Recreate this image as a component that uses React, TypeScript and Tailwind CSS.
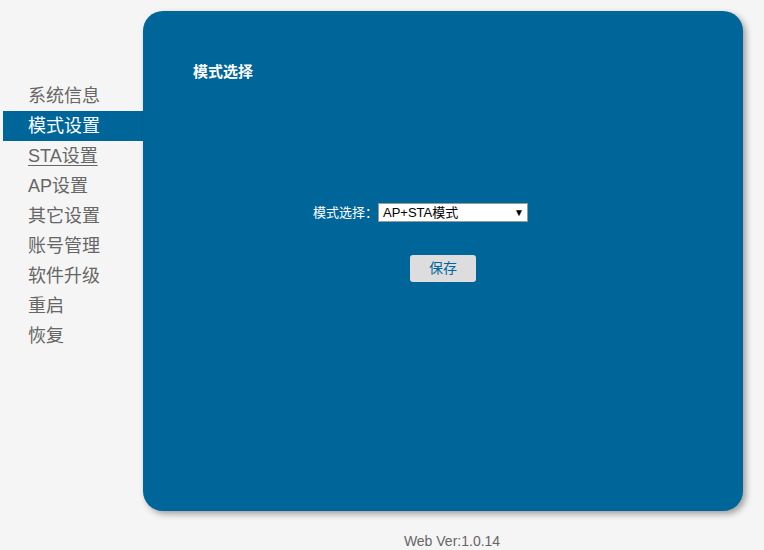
import React from 'react';

const menu = ['系统信息', '模式设置', 'STA设置', 'AP设置', '其它设置', '账号管理', '软件升级', '重启', '恢复'];

export default function App() {
  const font = { fontFamily: '"Liberation Sans", "Noto Sans CJK SC", sans-serif' };
  return (
    <div className="w-[764px] h-[550px] bg-[#f5f5f5] overflow-hidden" style={font}>
      <div className="flex pt-[11px]">
        {/* side menu */}
        <ul className="w-[140px] ml-[3px] mt-[70px] text-[18px]">
          {menu.map((m, i) => (
            <li
              key={m}
              className={
                'h-[30px] leading-[30px] pl-[25px] ' +
                (i === 1 ? 'bg-[#006699] text-white' : 'text-[#666]') +
                (i === 2 ? ' underline underline-offset-[3px]' : '')
              }
            >
              {m}
            </li>
          ))}
        </ul>

        {/* main panel */}
        <div className="w-[600px] h-[500px] bg-[#006699] rounded-[20px] shadow-[3px_3px_6px_rgba(0,0,0,0.35)] text-white">
          <div className="pl-[50px] pt-[51px] text-[15px] leading-[20px] font-bold">模式选择</div>
          <div className="flex items-center pl-[170px] mt-[121px] text-[13px]">
            <span>模式选择：</span>
            <div className="w-[150px] h-[19px] bg-white border border-[#999] text-black flex items-center justify-between pl-[4px] pr-[3px]">
              <span>AP+STA模式</span>
              <span className="text-[10px]">▼</span>
            </div>
          </div>
          <div className="pl-[267px] mt-[32px]">
            <button className="w-[66px] h-[27px] bg-[#dddddd] rounded-[3px] text-[#006699] text-[14px]">保存</button>
          </div>
        </div>
      </div>
      <div className="text-center text-[14px] text-[#666] mt-[20px] pl-[140px]">Web Ver:1.0.14</div>
    </div>
  );
}
